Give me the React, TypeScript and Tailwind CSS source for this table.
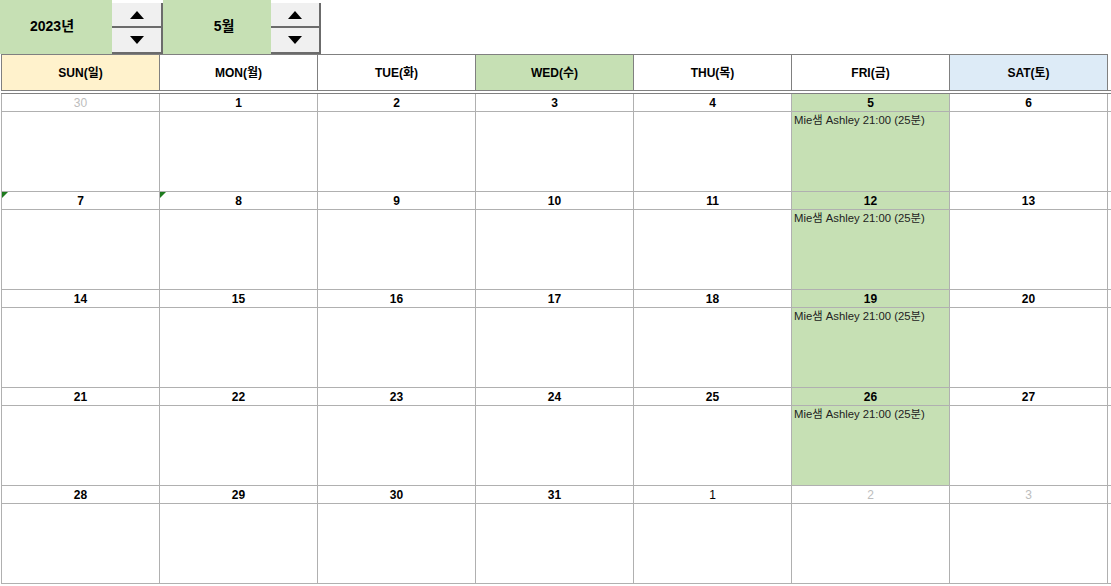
const font = { fontFamily: '"Liberation Sans", "Noto Sans CJK KR", sans-serif' };

type Day = { n: number; muted?: boolean; plain?: boolean; event?: boolean; note?: boolean };

const weeks: Day[][] = [
  [{ n: 30, muted: true }, { n: 1 }, { n: 2 }, { n: 3 }, { n: 4 }, { n: 5, event: true }, { n: 6 }],
  [{ n: 7, note: true }, { n: 8, note: true }, { n: 9 }, { n: 10 }, { n: 11 }, { n: 12, event: true }, { n: 13 }],
  [{ n: 14 }, { n: 15 }, { n: 16 }, { n: 17 }, { n: 18 }, { n: 19, event: true }, { n: 20 }],
  [{ n: 21 }, { n: 22 }, { n: 23 }, { n: 24 }, { n: 25 }, { n: 26, event: true }, { n: 27 }],
  [{ n: 28 }, { n: 29 }, { n: 30 }, { n: 31 }, { n: 1, plain: true }, { n: 2, muted: true }, { n: 3, muted: true }],
];

const heads = [
  { label: 'SUN(일)', bg: 'bg-[#fff2cc]' },
  { label: 'MON(월)', bg: 'bg-white' },
  { label: 'TUE(화)', bg: 'bg-white' },
  { label: 'WED(수)', bg: 'bg-[#c6e0b4]' },
  { label: 'THU(목)', bg: 'bg-white' },
  { label: 'FRI(금)', bg: 'bg-white' },
  { label: 'SAT(토)', bg: 'bg-[#ddebf7]' },
];

function Spinner({ w }: { w: string }) {
  return (
    <div className={`flex flex-col ${w} h-[51px] mt-[3px]`}>
      <button className="h-[25px] bg-[#f0f0f0] border-r-2 border-b-2 border-[#6b6b6b] flex items-center justify-center">
        <svg width="14" height="8" viewBox="0 0 14 8"><path d="M7 0 L14 8 L0 8 Z" fill="#000" /></svg>
      </button>
      <button className="h-[26px] bg-[#f0f0f0] border-r-2 border-b-2 border-[#6b6b6b] flex items-center justify-center">
        <svg width="14" height="8" viewBox="0 0 14 8"><path d="M0 0 L14 0 L7 8 Z" fill="#000" /></svg>
      </button>
    </div>
  );
}

export default function App() {
  return (
    <div className="w-[1111px] h-[586px] bg-white overflow-hidden text-black" style={font}>
      <div className="flex h-[54px]">
        <div className="w-[112px] bg-[#c6e0b4] flex items-center justify-center text-[14px] font-bold pr-[8px] pb-[1px]">2023년</div>
        <Spinner w="w-[51px]" />
        <div className="w-[108px] bg-[#c6e0b4] flex items-center justify-center text-[14px] font-bold pl-[14px] pb-[1px]">5월</div>
        <Spinner w="w-[50px]" />
      </div>
      <div className="pl-[1px]">
        <div className="grid grid-cols-[repeat(7,158px)] w-[1107px] border-t border-l border-[#808080]">
          {heads.map((h) => (
            <div key={h.label} className={`${h.bg} h-[35px] border-r border-[#808080] flex items-center justify-center text-[12px] font-bold`}>
              {h.label}
            </div>
          ))}
        </div>
        <div className="w-[1110px] border-t border-[#808080] h-[3px]" />
        <div className="w-[1110px] border-t border-[#808080] h-[1px]" />
        {weeks.map((w, i) => (
          <div key={i} className="grid grid-cols-[repeat(7,158px)_1fr] w-[1110px] border-l border-[#b0b0b0]">
            {w.map((d, j) => (
              <div key={j} className={`${d.event ? 'bg-[#c6e0b4]' : 'bg-white'} border-r border-[#b0b0b0] flex flex-col`}>
                <div className="relative h-[18px] border-b border-[#b0b0b0] flex items-center justify-center text-[12px]">
                  {d.note && (
                    <span className="absolute left-0 top-0 w-0 h-0 border-t-[6px] border-r-[6px] border-t-[#1e7b1e] border-r-transparent" />
                  )}
                  <span className={d.muted ? 'text-[#bdbdbd] font-normal' : d.plain ? 'text-black font-normal' : 'font-bold'}>{d.n}</span>
                </div>
                <div className="h-[80px] border-b border-[#b0b0b0] px-[2px] pt-[1px] text-[11.3px] text-[#222] leading-[14px]">
                  {d.event && 'Mie샘 Ashley 21:00 (25분)'}
                </div>
              </div>
            ))}
            <div className="flex flex-col">
              <div className="h-[18px] border-b border-[#b0b0b0]" />
              <div className="h-[80px] border-b border-[#b0b0b0]" />
            </div>
          </div>
        ))}
      </div>
    </div>
  );
}
